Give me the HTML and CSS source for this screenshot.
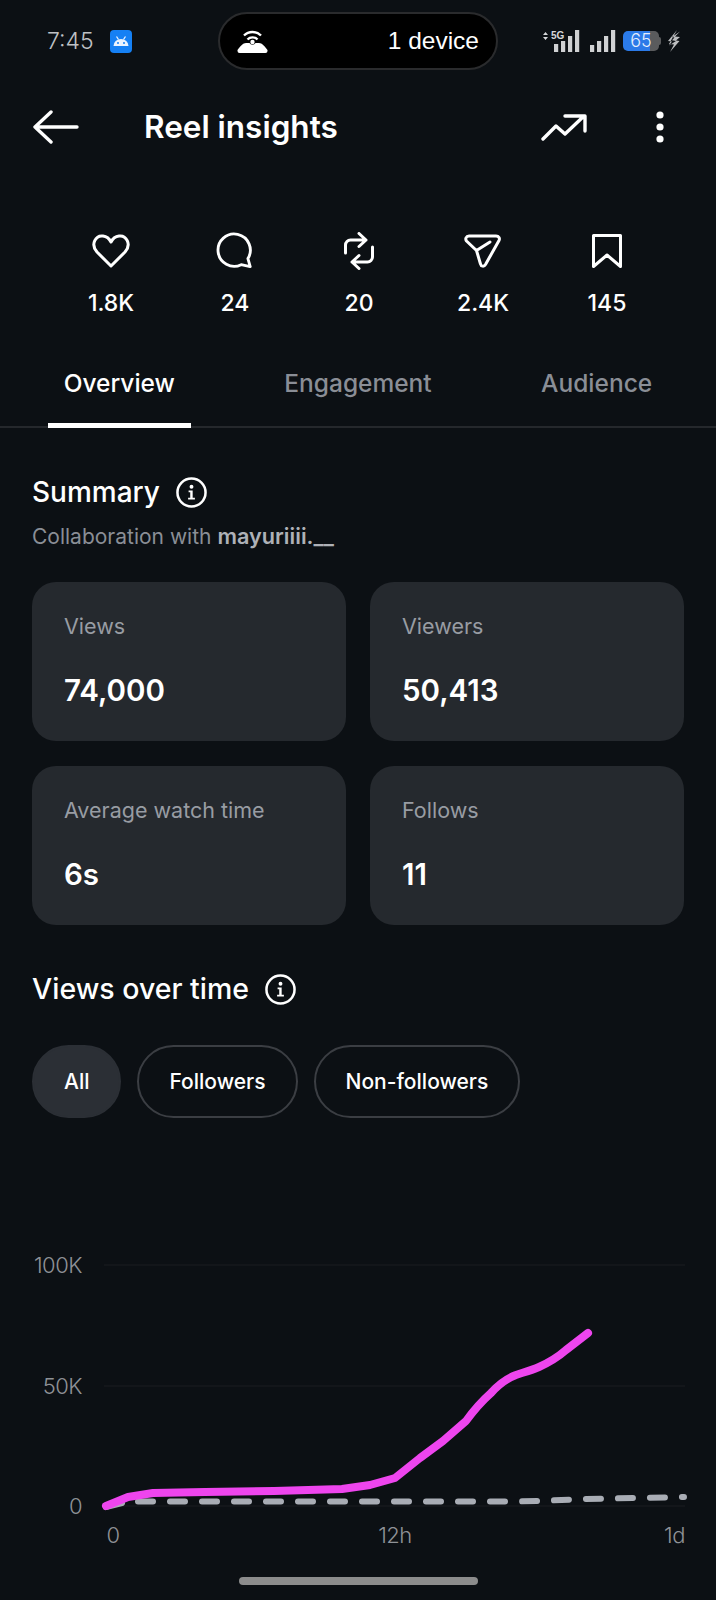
FILE: index.html
```html
<!DOCTYPE html>
<html lang="en">
<head>
<meta charset="utf-8">
<title>Reel insights</title>
<link rel="stylesheet" href="styles.css">
</head>
<body>
<main class="screen">
  <div class="status">
    <div class="status-left">
      <span class="clock">7:45</span>
      <svg class="app-badge" width="22" height="23" viewBox="0 0 22 23">
        <rect width="22" height="23" rx="4" fill="#1580f4"/>
        <path d="M3.500 16a7.500 7 0 0 1 15 0z" fill="#eaf3ff"/>
        <path d="M6.500 6.500l2 3M15.500 6.500l-2 3" stroke="#eaf3ff" stroke-width="1.300"/>
        <circle cx="8" cy="13" r="1" fill="#1580f4"/><circle cx="14" cy="13" r="1" fill="#1580f4"/>
      </svg>
    </div>
    <div class="pill-device">
      <svg width="31" height="24" viewBox="0 0 31 24" fill="none">
        <path d="M7 6.500a12 12 0 0 1 17 0" stroke="#fff" stroke-width="2.400"/>
        <path d="M10.500 10.500a7 7 0 0 1 10 0" stroke="#fff" stroke-width="2.400"/>
        <path d="M9 14h3.500a3.500 3.500 0 0 0 6 0H22c3 0 6 3.500 8.500 7v1a2 2 0 0 1-2 2H2.500a2 2 0 0 1-2-2v-1C3 17.500 6 14 9 14z" fill="#fff"/>
        <circle cx="15.500" cy="13" r="2.200" fill="#fff"/>
      </svg>
      <span class="device-text">1 device</span>
    </div>
    <div class="status-right">
      <svg width="80" height="24" viewBox="0 0 80 24">
        <path d="M0 6l2.500-3L5 6zM0 8l2.500 3L5 8z" fill="#d6d7d9"/>
        <text class="net" x="8" y="10">5G</text>
        <g fill="#d0d1d3">
          <rect x="11" y="15" width="4.200" height="8"/><rect x="18" y="12" width="4.200" height="11"/><rect x="25" y="7" width="4.200" height="16"/><rect x="32" y="1" width="4.200" height="22"/>
          <rect x="47" y="16" width="4.200" height="7"/><rect x="54" y="12" width="4.200" height="11"/><rect x="61" y="7" width="4.200" height="16"/><rect x="68" y="1" width="4.200" height="22"/>
        </g>
      </svg>
      <div class="battery">65</div>
      <div class="battery-nub"></div>
      <svg class="bolt" width="14" height="22" viewBox="0 0 14 22"><path d="M10 0L1 11l4 .5L2 15.500 9 11l-4-.8 2.500-2.700-2.500-.5L13 1.500 8 6.500l5 .5-4 3.500 3.500.5L3 22l4-7.500L2 14" fill="#bdbec0"/></svg>
    </div>
  </div>

  <header class="appbar">
    <svg class="back" width="46" height="34" viewBox="0 0 46 34" fill="none" stroke="#fff" stroke-width="3.400" stroke-linecap="round" stroke-linejoin="round"><path d="M18 2L2 17l16 15M2 17h42"/></svg>
    <h1 class="title">Reel insights</h1>
    <svg class="trend" width="46" height="28" viewBox="0 0 46 28" fill="none" stroke="#fff" stroke-width="3.400" stroke-linecap="round" stroke-linejoin="round"><path d="M2 26l13-13 9 8L43 3M24 3h20v15"/></svg>
    <svg class="more" width="8" height="32" viewBox="0 0 8 32" fill="#fff"><circle cx="4" cy="4" r="3.600"/><circle cx="4" cy="16" r="3.600"/><circle cx="4" cy="28" r="3.600"/></svg>
  </header>

  <section class="stats">
    <div class="stat">
      <svg width="40" height="36" viewBox="0 0 40 36" fill="none" class="stat-icon"><path d="M20 33L6 19C-1 11 5 2 12 3c4 .5 6.500 3 8 6 1.500-3 4-5.500 8-6 7-1 13 8 6 16z"/></svg>
      <span class="stat-num">1.8K</span>
    </div>
    <div class="stat">
      <svg width="40" height="40" viewBox="0 0 40 40" fill="none" class="stat-icon"><path d="M26.500 34.400A17 17 0 1 1 33.600 28L36 36.500z"/></svg>
      <span class="stat-num">24</span>
    </div>
    <div class="stat">
      <svg width="30" height="38" viewBox="0 0 30 38" fill="none" class="stat-icon"><path d="M1.500 21V13a5 5 0 0 1 5-5H22M15 1.500L22 8l-7 6.500M28.500 15v10a5 5 0 0 1-5 5H8M15 23.500L8 30l7 6.500"/></svg>
      <span class="stat-num">20</span>
    </div>
    <div class="stat">
      <svg width="38" height="35" viewBox="0 0 38 35" fill="none" class="stat-icon"><path d="M5 2.500h27c3 0 4 2.500 3 4.500L21.500 31c-1.500 2.500-4.500 2-5-.5L12.500 17l-10-9.500C1 5.500 2 2.500 5 2.500zM12.500 17L26 8.500"/></svg>
      <span class="stat-num">2.4K</span>
    </div>
    <div class="stat">
      <svg width="30" height="34" viewBox="0 0 30 34" fill="none" class="stat-icon"><path d="M1.500 1.500h27v31L15 21 1.500 32.500z"/></svg>
      <span class="stat-num">145</span>
    </div>
  </section>

  <nav class="tabs">
    <div class="tab tab-active">Overview</div>
    <div class="tab">Engagement</div>
    <div class="tab">Audience</div>
  </nav>

  <section class="content">
    <div class="section-head">
      <h2 class="section-title">Summary</h2>
      <svg class="info" width="31" height="31" viewBox="0 0 32 32"><circle cx="16" cy="16" r="14.500" fill="none" stroke="#fff" stroke-width="2.600"/><circle cx="16" cy="10" r="2" fill="#fff"/><path d="M13 14h4.200v7.500H19.500v1.800h-7v-1.800h2.200v-5.700H13z" fill="#fff"/></svg>
    </div>
    <p class="collab">Collaboration with <b class="collab-name">mayuriiii.__</b></p>

    <div class="cards">
      <div class="card"><div class="card-label">Views</div><div class="card-value">74,000</div></div>
      <div class="card"><div class="card-label">Viewers</div><div class="card-value">50,413</div></div>
      <div class="card"><div class="card-label">Average watch time</div><div class="card-value">6s</div></div>
      <div class="card"><div class="card-label">Follows</div><div class="card-value">11</div></div>
    </div>

    <div class="section-head section-head-views">
      <h2 class="section-title section-title-regular">Views over time</h2>
      <svg class="info" width="31" height="31" viewBox="0 0 32 32"><circle cx="16" cy="16" r="14.500" fill="none" stroke="#fff" stroke-width="2.600"/><circle cx="16" cy="10" r="2" fill="#fff"/><path d="M13 14h4.200v7.500H19.500v1.800h-7v-1.800h2.200v-5.700H13z" fill="#fff"/></svg>
    </div>

    <div class="filters">
      <span class="filter filter-on">All</span>
      <span class="filter">Followers</span>
      <span class="filter">Non-followers</span>
    </div>
  </section>

  <svg class="chart" width="716" height="430" viewBox="0 1118 716 430">
    <g class="grid">
      <line x1="104" y1="1265" x2="685" y2="1265"/>
      <line x1="104" y1="1386" x2="685" y2="1386"/>
      <line x1="104" y1="1506" x2="685" y2="1506"/>
    </g>
    <g class="axis">
      <text x="82" y="1273" text-anchor="end">100K</text>
      <text x="82" y="1394" text-anchor="end">50K</text>
      <text x="82" y="1514" text-anchor="end">0</text>
      <text x="113" y="1543" text-anchor="middle">0</text>
      <text x="395" y="1543" text-anchor="middle">12h</text>
      <text x="685" y="1543" text-anchor="end">1d</text>
    </g>
    <path class="line-dash-start" d="M106 1507L122 1503"/>
    <path class="line-dash" d="M138 1501.500H516C540 1501 560 1500 584 1499L684 1497"/>
    <path class="line-main" d="M106 1506L128 1497L153 1493L205 1492L274 1491L342 1489L370 1485L395 1478L420 1458L443 1441L466 1421C474 1410 482 1401 491 1393C499 1384 508 1378 516 1375C525 1372 532 1370 539 1367C550 1362 558 1357 566 1350L588 1333"/>
  </svg>

  <div class="home-bar"></div>
</main>
</body>
</html>
```

FILE: styles.css
```css
* { box-sizing: border-box; }
html, body { margin: 0; padding: 0; background: #0c1014; }
body { font-family: Inter, "Liberation Sans", sans-serif; color: #fff; }
h1, h2, p { margin: 0; }

.screen { width: 716px; height: 1600px; overflow: hidden; background: #0c1014; }

/* status bar */
.status { height: 82px; padding-top: 12px; display: grid; grid-template-columns: 218px 280px 1fr; }
.status-left { height: 58px; padding-left: 47px; display: flex; align-items: center; gap: 16px; }
.clock { font-size: 23px; color: #bfc1c4; font-weight: 300; }
.app-badge { display: block; }
.pill-device { height: 58px; border: 2px solid #2a2b2d; border-radius: 29px; background: #000; padding: 0 17px; display: flex; align-items: center; justify-content: space-between; }
.device-text { font-size: 24.500px; color: #fff; font-family: "Liberation Sans", Arial, sans-serif; }
.status-right { height: 58px; padding-left: 45px; display: flex; align-items: center; }
.net { font-size: 10px; font-weight: 700; fill: #d6d7d9; font-family: "Liberation Sans", sans-serif; }
.battery { width: 36px; height: 20px; border-radius: 5px; background: linear-gradient(to right, #2b7ae8 75%, #5a5b5d 75%); color: #e6eefc; font-size: 18px; line-height: 20px; text-align: center; font-weight: 300; }
.battery-nub { width: 2px; height: 8px; background: #5a5b5d; border-radius: 0 2px 2px 0; }
.bolt { margin-left: 6px; }

/* app bar */
.appbar { height: 90px; padding: 0 0 0 33px; display: flex; align-items: center; }
.title { font-size: 31.500px; font-weight: 600; line-height: 40px; margin-left: 65px; width: 397px; }
.trend { margin-right: 69px; }
.back, .trend, .more { display: block; flex: none; }

/* stats */
.stats { display: grid; grid-template-columns: repeat(5, 124px); padding: 60px 47px 0 49px; }
.stat { display: flex; flex-direction: column; align-items: center; }
.stat-icon { height: 38px; stroke: #fff; stroke-width: 3; stroke-linejoin: round; stroke-linecap: round; display: block; }
.stat-num { margin-top: 19px; font-size: 23px; line-height: 28px; font-weight: 500; }

/* tabs */
.tabs { height: 83px; margin-top: 28px; display: grid; grid-template-columns: repeat(3, 1fr); border-bottom: 2px solid #25282c; }
.tab { height: 83px; padding-top: 18px; text-align: center; font-size: 24.500px; line-height: 40px; font-weight: 500; color: #8a8e96; }
.tab-active { color: #fff; position: relative; }
.tab-active::after { content: ""; position: absolute; left: 48px; bottom: 0; width: 143px; height: 5px; background: #fff; }

/* content */
.content { padding: 44px 32px 0; }
.section-head { display: flex; align-items: center; height: 40px; gap: 16px; }
.section-title { font-size: 28px; line-height: 40px; font-weight: 500; }
.section-title-regular { font-size: 28.500px; }
.info { display: block; flex: none; }
.collab { margin-top: 10px; height: 30px; font-size: 21px; line-height: 30px; color: #8a8e96; }
.collab-name { font-size: 21.700px; line-height: 20px; font-weight: 600; color: #aeb1b7; }

.cards { margin-top: 30px; display: grid; grid-template-columns: 314px 314px; gap: 25px 24px; }
.card { height: 159px; border-radius: 24px; background: #25292e; padding: 29px 32px 0; }
.card-label { font-size: 21.500px; line-height: 30px; color: #989ca3; }
.card-value { margin-top: 29px; font-size: 29.500px; line-height: 40px; font-weight: 600; }

.section-head-views { margin-top: 44px; }
.filters { margin-top: 36px; display: flex; gap: 16px; }
.filter { height: 73px; border-radius: 37px; border: 2px solid #3b3e43; padding: 0 30px; display: flex; align-items: center; font-size: 21px; font-weight: 500; }
.filter-on { background: #2b2f35; border-color: #2b2f35; }

/* chart */
.chart { display: block; }
.grid line { stroke: #16191d; stroke-width: 1.500; }
.axis text { font-size: 22px; font-weight: 300; letter-spacing: -0.5px; fill: #8f9297; font-family: Inter, "Liberation Sans", sans-serif; }
.line-main { fill: none; stroke: #ee45ee; stroke-width: 8; stroke-linecap: round; stroke-linejoin: round; }
.line-dash { fill: none; stroke: #a9adb5; stroke-width: 6; stroke-linecap: round; stroke-dasharray: 15 17; }
.line-dash-start { fill: none; stroke: #a9adb5; stroke-width: 6; stroke-linecap: round; }

.home-bar { width: 239px; height: 8px; margin: 29px auto 0; border-radius: 4px; background: #8c8c8c; }
```
